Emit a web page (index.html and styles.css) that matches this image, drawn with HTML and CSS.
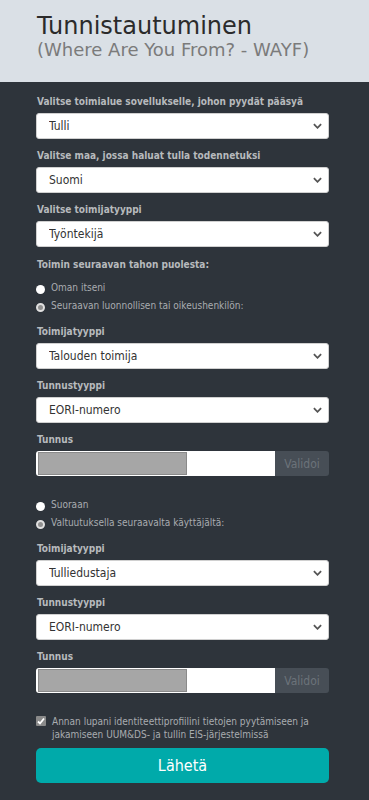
FILE: index.html
```html
<!DOCTYPE html>
<html lang="fi">
<head>
    <meta charset="UTF-8">
    <meta name="viewport" content="width=device-width, initial-scale=1.0">
    <title>Tunnistautuminen</title>
    <link rel="stylesheet" href="styles.css">
</head>
<body>

<header class="head">
    <h1>Tunnistautuminen</h1>
    <p class="sub">(Where Are You From? - WAYF)</p>
</header>

<main class="panel">
    <div class="field">
        <span class="lbl">Valitse toimialue sovellukselle, johon pyydät pääsyä</span>
        <div class="sel"><select><option>Tulli</option></select><svg class="chev" viewBox="0 0 10 6"><path d="M1 1l4 4 4-4" /></svg></div>
    </div>

    <div class="field">
        <span class="lbl">Valitse maa, jossa haluat tulla todennetuksi</span>
        <div class="sel"><select><option>Suomi</option></select><svg class="chev" viewBox="0 0 10 6"><path d="M1 1l4 4 4-4" /></svg></div>
    </div>

    <div class="field">
        <span class="lbl">Valitse toimijatyyppi</span>
        <div class="sel"><select><option>Työntekijä</option></select><svg class="chev" viewBox="0 0 10 6"><path d="M1 1l4 4 4-4" /></svg></div>
    </div>

    <span class="lbl heading">Toimin seuraavan tahon puolesta:</span>

    <div class="radios">
        <label class="radio"><span class="dot"></span>Oman itseni</label>
        <label class="radio"><span class="dot on"></span>Seuraavan luonnollisen tai oikeushenkilön:</label>
    </div>

    <div class="field">
        <span class="lbl">Toimijatyyppi</span>
        <div class="sel"><select><option>Talouden toimija</option></select><svg class="chev" viewBox="0 0 10 6"><path d="M1 1l4 4 4-4" /></svg></div>
    </div>

    <div class="field">
        <span class="lbl">Tunnustyyppi</span>
        <div class="sel"><select><option>EORI-numero</option></select><svg class="chev" viewBox="0 0 10 6"><path d="M1 1l4 4 4-4" /></svg></div>
    </div>

    <div class="field">
        <span class="lbl">Tunnus</span>
        <div class="idrow">
            <div class="idbox"><span class="mask"></span></div>
            <button class="validate" disabled>Validoi</button>
        </div>
    </div>

    <div class="radios second">
        <label class="radio"><span class="dot"></span>Suoraan</label>
        <label class="radio"><span class="dot on"></span>Valtuutuksella seuraavalta käyttäjältä:</label>
    </div>

    <div class="field">
        <span class="lbl">Toimijatyyppi</span>
        <div class="sel"><select><option>Tulliedustaja</option></select><svg class="chev" viewBox="0 0 10 6"><path d="M1 1l4 4 4-4" /></svg></div>
    </div>

    <div class="field">
        <span class="lbl">Tunnustyyppi</span>
        <div class="sel"><select><option>EORI-numero</option></select><svg class="chev" viewBox="0 0 10 6"><path d="M1 1l4 4 4-4" /></svg></div>
    </div>

    <div class="field">
        <span class="lbl">Tunnus</span>
        <div class="idrow">
            <div class="idbox"><span class="mask"></span></div>
            <button class="validate" disabled>Validoi</button>
        </div>
    </div>

    <label class="consent">
        <span class="box"><svg viewBox="0 0 10 10"><path d="M2 5.5l2 2 4-5" /></svg></span>
        <span>Annan lupani identiteettiprofiilini tietojen pyytämiseen ja jakamiseen UUM&amp;DS- ja tullin EIS-järjestelmissä</span>
    </label>

    <button class="send">Lähetä</button>
</main>

</body>
</html>
```

FILE: styles.css
```css
body {
    margin: 0;
    font-family: "DejaVu Sans Condensed", "DejaVu Sans", Verdana, sans-serif;
    background: #2e343b;
}

.head {
    background: #dae0e6;
    height: 82px;
    padding: 13px 0 0 37px;
    box-sizing: border-box;
    font-family: "DejaVu Sans", Verdana, sans-serif;
}

.head h1 {
    margin: 0;
    font-size: 24px;
    font-weight: normal;
    line-height: 27px;
    color: #2b2b2b;
}

.head .sub {
    margin: 0;
    font-size: 18px;
    line-height: 20px;
    color: #7b7b7b;
}

.panel {
    display: flex;
    flex-direction: column;
    padding: 13px 40px 18px 36px;
}

.field {
    display: flex;
    flex-direction: column;
    margin-bottom: 10px;
}

.lbl {
    font-size: 10px;
    font-weight: bold;
    line-height: 14px;
    color: #b7babd;
    margin-bottom: 4px;
    padding-left: 1px;
}

.heading {
    margin: 1px 0 8px;
}

.sel {
    position: relative;
    height: 26px;
}

.sel select {
    appearance: none;
    width: 100%;
    height: 26px;
    border: 1px solid #d0d0d0;
    border-radius: 3px;
    background: #fff;
    padding: 0 0 0 12px;
    font-family: inherit;
    font-size: 12px;
    color: #333;
}

.chev {
    position: absolute;
    right: 7px;
    top: 10px;
    width: 9px;
    height: 6px;
    fill: none;
    stroke: #555;
    stroke-width: 2;
    pointer-events: none;
}

.radios {
    display: flex;
    flex-direction: column;
    gap: 3px;
    margin-bottom: 12px;
}

.radios.second {
    margin-top: 11px;
    margin-bottom: 12px;
}

.radio {
    display: flex;
    align-items: center;
    font-size: 10px;
    line-height: 15px;
    color: #a9acb0;
}

.dot {
    width: 9px;
    height: 9px;
    border-radius: 50%;
    background: #fff;
    margin: 3px 6px 0 0;
    box-sizing: border-box;
}

.dot.on {
    background: #8f8f8f;
    border: 2px solid #e0e0e0;
}

.idrow {
    display: flex;
    height: 25px;
}

.idbox {
    flex: 1;
    background: #fff;
    border-radius: 3px 0 0 3px;
    padding: 1px 0 1px 2px;
    display: flex;
}

.mask {
    width: 147px;
    background: #a6a6a6;
    border: 1px solid #8a8a8a;
}

.validate {
    width: 54px;
    border: 0;
    border-radius: 0 3px 3px 0;
    background: #474e56;
    color: #6c737a;
    font-family: inherit;
    font-size: 12px;
    padding: 0;
}

.consent {
    display: flex;
    gap: 6px;
    margin-top: 12px;
    font-size: 10px;
    line-height: 13px;
    color: #a9acb0;
}

.box {
    flex: none;
    width: 10px;
    height: 10px;
    margin-top: 1px;
    background: #8a8a8a;
    border-radius: 1px;
}

.box svg {
    display: block;
    width: 10px;
    height: 10px;
    fill: none;
    stroke: #fff;
    stroke-width: 1.8;
}

.send {
    margin-top: 7px;
    height: 35px;
    border: 0;
    border-radius: 5px;
    background: #00aaaa;
    color: #fff;
    font-family: inherit;
    font-size: 16px;
}
```
